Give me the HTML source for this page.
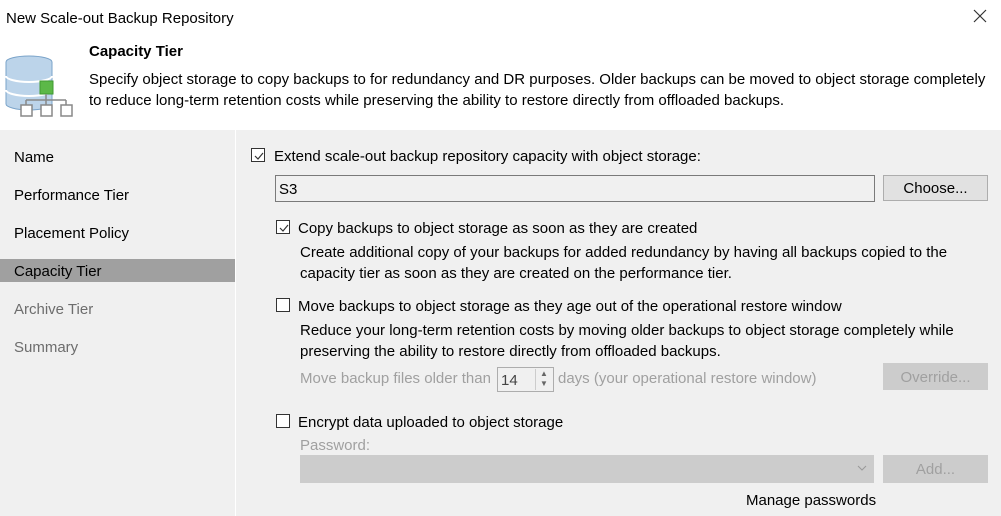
<!DOCTYPE html>
<html><head><meta charset="utf-8"><style>
*{margin:0;padding:0;box-sizing:border-box}
body{width:1001px;height:516px;overflow:hidden;background:#f0f0f0;font-family:"Liberation Sans",sans-serif;font-size:15px;color:#000;position:relative}
.a{position:absolute;white-space:nowrap}
.g{color:#a0a0a0}
.cb{position:absolute;width:14px;height:14px;border:1px solid #333;background:#fff}
.cb svg{position:absolute;left:1px;top:1px}
.btn{position:absolute;border:1px solid #adadad;background:#e1e1e1;text-align:center;line-height:24px}
</style></head><body>
<div class="a" style="left:0;top:0;width:1001px;height:130px;background:#fff"></div>
<div class="a" style="left:6px;top:10px">New Scale-out Backup Repository</div>
<svg class="a" style="left:973px;top:9px" width="14" height="14"><path d="M1 1L13 13M13 1L1 13" stroke="#333" stroke-width="1.2"/></svg>
<svg class="a" style="left:4px;top:55px" width="72" height="64">
<ellipse cx="25" cy="7" rx="23" ry="6" fill="#bcd4ea" stroke="#7aa3c9"/>
<path d="M2 7v42c0 3 10 6 23 6s23-3 23-6V7" fill="#bcd4ea" stroke="#7aa3c9"/>
<path d="M2 21c0 3 10 6 23 6s23-3 23-6M2 35c0 3 10 6 23 6s23-3 23-6" fill="none" stroke="#fff" stroke-width="2"/>
<rect x="36" y="26" width="13" height="13" fill="#5cb848" stroke="#3f9a31"/>
<path d="M42 39v6M22 45h40M22 45v5M42 45v5M62 45v5" stroke="#888" stroke-width="1.5" fill="none"/>
<rect x="17" y="50" width="11" height="11" fill="#fff" stroke="#888" stroke-width="1.5"/>
<rect x="37" y="50" width="11" height="11" fill="#fff" stroke="#888" stroke-width="1.5"/>
<rect x="57" y="50" width="11" height="11" fill="#fff" stroke="#888" stroke-width="1.5"/>
</svg>
<div class="a" style="left:89px;top:43px;font-weight:bold">Capacity Tier</div>
<div class="a" style="left:89px;top:69px;line-height:21px">Specify object storage to copy backups to for redundancy and DR purposes. Older backups can be moved to object storage completely<br>to reduce long-term retention costs while preserving the ability to restore directly from offloaded backups.</div>
<div class="a" style="left:235px;top:130px;width:1px;height:386px;background:#fff"></div>
<div class="a" style="left:14px;top:149px">Name</div>
<div class="a" style="left:14px;top:187px">Performance Tier</div>
<div class="a" style="left:14px;top:225px">Placement Policy</div>
<div class="a" style="left:0;top:259px;width:235px;height:23px;background:#a0a0a0"></div>
<div class="a" style="left:14px;top:263px">Capacity Tier</div>
<div class="a" style="left:14px;top:301px;color:#6d6d6d">Archive Tier</div>
<div class="a" style="left:14px;top:339px;color:#6d6d6d">Summary</div>

<div class="cb" style="left:251px;top:148px"><svg width="12" height="12"><path d="M2 6L5 9 10 3" stroke="#333" fill="none" stroke-width="1.2"/></svg></div>
<div class="a" style="left:274px;top:148px">Extend scale-out backup repository capacity with object storage:</div>
<div class="a" style="left:275px;top:175px;width:600px;height:27px;border:1px solid #7a7a7a;background:#f0f0f0;padding:5px 0 0 3px">S3</div>
<div class="btn" style="left:883px;top:175px;width:105px;height:26px;line-height:25px">Choose...</div>

<div class="cb" style="left:276px;top:220px"><svg width="12" height="12"><path d="M2 6L5 9 10 3" stroke="#333" fill="none" stroke-width="1.2"/></svg></div>
<div class="a" style="left:298px;top:220px">Copy backups to object storage as soon as they are created</div>
<div class="a" style="left:300px;top:242px;line-height:21px">Create additional copy of your backups for added redundancy by having all backups copied to the<br>capacity tier as soon as they are created on the performance tier.</div>

<div class="cb" style="left:276px;top:298px"></div>
<div class="a" style="left:298px;top:298px">Move backups to object storage as they age out of the operational restore window</div>
<div class="a" style="left:300px;top:320px;line-height:21px">Reduce your long-term retention costs by moving older backups to object storage completely while<br>preserving the ability to restore directly from offloaded backups.</div>
<div class="a g" style="left:300px;top:370px">Move backup files older than</div>
<div class="a" style="left:497px;top:367px;width:57px;height:25px;border:1px solid #adadad;background:#f0f0f0;padding:4px 0 0 3px;color:#444">14</div>
<div class="a" style="left:535px;top:369px;width:17px;height:21px;border-left:1px solid #ccc;font-size:8px;color:#666;line-height:10px;text-align:center">▲<br>▼</div>
<div class="a g" style="left:558px;top:370px">days (your operational restore window)</div>
<div class="btn g" style="left:883px;top:363px;width:105px;height:27px;border-color:#ccc;background:#ccc;line-height:27px">Override...</div>

<div class="cb" style="left:276px;top:414px"></div>
<div class="a" style="left:298px;top:414px">Encrypt data uploaded to object storage</div>
<div class="a g" style="left:300px;top:437px">Password:</div>
<div class="a" style="left:300px;top:455px;width:574px;height:28px;background:#ccc;border:1px solid #ccc"></div>
<svg class="a" style="left:857px;top:465px" width="10" height="6"><path d="M1 1l4 4 4-4" stroke="#999" fill="none"/></svg>
<div class="btn g" style="left:883px;top:455px;width:105px;height:28px;border-color:#ccc;background:#ccc;line-height:27px">Add...</div>
<div class="a" style="left:746px;top:492px">Manage passwords</div>
</body></html>
